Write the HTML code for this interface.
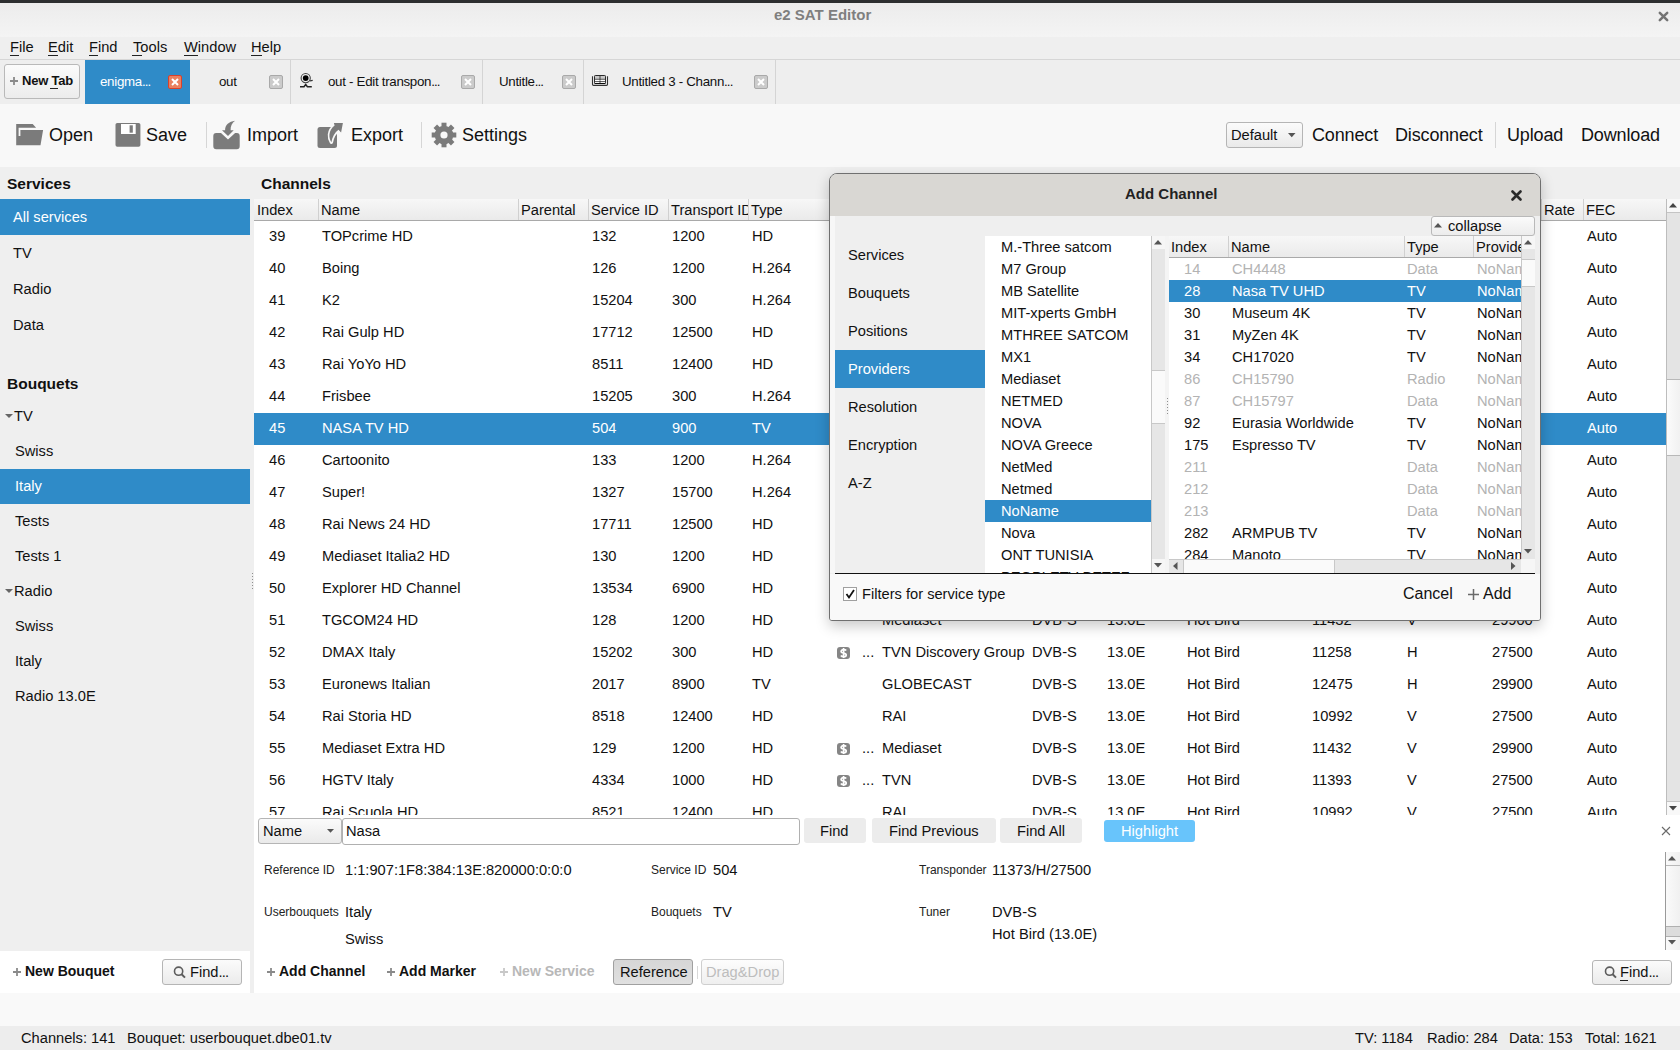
<!DOCTYPE html>
<html><head><meta charset="utf-8"><style>
html,body{margin:0;padding:0;width:1680px;height:1050px;overflow:hidden;background:#efefef;font-family:'Liberation Sans', sans-serif}
.t{position:absolute;white-space:pre;line-height:20px;font-family:'Liberation Sans', sans-serif}
</style></head><body>
<div style="position:absolute;left:0px;top:0px;width:1680px;height:3px;background:#2d2f30"></div>
<div style="position:absolute;left:0px;top:3px;width:1680px;height:34px;background:linear-gradient(#ececec,#f4f4f4)"></div>
<div class="t" style="left:774px;top:5px;font-size:15px;color:#7f7f7f;font-weight:bold;">e2 SAT Editor</div>
<svg style="position:absolute;left:1658px;top:11px" width="11" height="11"><path d="M1.8 1.8L9.2 9.2M9.2 1.8L1.8 9.2" stroke="#737373" stroke-width="2.5" stroke-linecap="round"/></svg>
<div style="position:absolute;left:0px;top:37px;width:1680px;height:22px;background:#efefef"></div>
<div class="t" style="left:10px;top:37px;font-size:14.67px;color:#111;font-weight:normal;">File</div>
<div style="position:absolute;left:10px;top:55px;width:9px;height:1px;background:#222"></div>
<div class="t" style="left:48px;top:37px;font-size:14.67px;color:#111;font-weight:normal;">Edit</div>
<div style="position:absolute;left:48px;top:55px;width:10px;height:1px;background:#222"></div>
<div class="t" style="left:89px;top:37px;font-size:14.67px;color:#111;font-weight:normal;">Find</div>
<div style="position:absolute;left:89px;top:55px;width:9px;height:1px;background:#222"></div>
<div class="t" style="left:133px;top:37px;font-size:14.67px;color:#111;font-weight:normal;">Tools</div>
<div style="position:absolute;left:132px;top:55px;width:10px;height:1px;background:#222"></div>
<div class="t" style="left:184px;top:37px;font-size:14.67px;color:#111;font-weight:normal;">Window</div>
<div style="position:absolute;left:184px;top:55px;width:14px;height:1px;background:#222"></div>
<div class="t" style="left:251px;top:37px;font-size:14.67px;color:#111;font-weight:normal;">Help</div>
<div style="position:absolute;left:251px;top:55px;width:11px;height:1px;background:#222"></div>
<div style="position:absolute;left:0px;top:59px;width:1680px;height:45px;background:#eeeeee;border-top:1px solid #d6d6d6;box-sizing:border-box"></div>
<div style="position:absolute;left:4px;top:64px;width:76px;height:35px;background:linear-gradient(#fbfbfb,#ececec);border:1px solid #b9b9b9;border-radius:3px;box-sizing:border-box"></div>
<svg style="position:absolute;left:9.0px;top:76.0px" width="10" height="10"><path d="M1 5.0H9M5.0 1V9" stroke="#8a8a8a" stroke-width="1.8"/></svg>
<div class="t" style="left:22px;top:71px;font-size:13px;color:#111;font-weight:bold;letter-spacing:-0.2px">New Tab</div>
<div style="position:absolute;left:50px;top:88px;width:8px;height:1px;background:#222"></div>
<div style="position:absolute;left:85px;top:60px;width:105px;height:44px;background:#2f8bc8"></div>
<div class="t" style="left:100px;top:72px;font-size:13.33px;color:#fff;font-weight:normal;letter-spacing:-0.3px">enigma<span style="letter-spacing:-0.9px">...</span></div>
<div style="position:absolute;left:168px;top:75px;width:14px;height:14px;box-sizing:border-box;border:1px solid #d9412b;background:#e98060;border-radius:2px"></div>
<svg style="position:absolute;left:168px;top:75px" width="14" height="14"><path d="M4 4L10 10M10 4L4 10" stroke="#fff" stroke-width="2"/></svg>
<div class="t" style="left:219px;top:72px;font-size:13.33px;color:#111;font-weight:normal;letter-spacing:-0.3px">out</div>
<div style="position:absolute;left:269px;top:75px;width:14px;height:14px;box-sizing:border-box;border:1px solid #a9a9a9;background:#cbcbcb;border-radius:2px"></div>
<svg style="position:absolute;left:269px;top:75px" width="14" height="14"><path d="M4 4L10 10M10 4L4 10" stroke="#fff" stroke-width="2"/></svg>
<div style="position:absolute;left:290px;top:60px;width:1px;height:44px;background:#d4d4d4"></div>
<div class="t" style="left:328px;top:72px;font-size:13.33px;color:#111;font-weight:normal;letter-spacing:-0.3px">out - Edit transpon<span style="letter-spacing:-0.9px">...</span></div>
<div style="position:absolute;left:461px;top:75px;width:14px;height:14px;box-sizing:border-box;border:1px solid #a9a9a9;background:#cbcbcb;border-radius:2px"></div>
<svg style="position:absolute;left:461px;top:75px" width="14" height="14"><path d="M4 4L10 10M10 4L4 10" stroke="#fff" stroke-width="2"/></svg>
<div style="position:absolute;left:482px;top:60px;width:1px;height:44px;background:#d4d4d4"></div>
<div class="t" style="left:499px;top:72px;font-size:13.33px;color:#111;font-weight:normal;letter-spacing:-0.3px">Untitle<span style="letter-spacing:-0.9px">...</span></div>
<div style="position:absolute;left:562px;top:75px;width:14px;height:14px;box-sizing:border-box;border:1px solid #a9a9a9;background:#cbcbcb;border-radius:2px"></div>
<svg style="position:absolute;left:562px;top:75px" width="14" height="14"><path d="M4 4L10 10M10 4L4 10" stroke="#fff" stroke-width="2"/></svg>
<div style="position:absolute;left:583px;top:60px;width:1px;height:44px;background:#d4d4d4"></div>
<div class="t" style="left:622px;top:72px;font-size:13.33px;color:#111;font-weight:normal;letter-spacing:-0.3px">Untitled 3 - Chann<span style="letter-spacing:-0.9px">...</span></div>
<div style="position:absolute;left:754px;top:75px;width:14px;height:14px;box-sizing:border-box;border:1px solid #a9a9a9;background:#cbcbcb;border-radius:2px"></div>
<svg style="position:absolute;left:754px;top:75px" width="14" height="14"><path d="M4 4L10 10M10 4L4 10" stroke="#fff" stroke-width="2"/></svg>
<div style="position:absolute;left:775px;top:60px;width:1px;height:44px;background:#d4d4d4"></div>
<div style="position:absolute;left:0px;top:104px;width:1680px;height:63px;background:#f8f8f8"></div>
<div class="t" style="left:49px;top:125px;font-size:18px;color:#111;font-weight:normal;">Open</div>
<div class="t" style="left:146px;top:125px;font-size:18px;color:#111;font-weight:normal;">Save</div>
<div class="t" style="left:247px;top:125px;font-size:18px;color:#111;font-weight:normal;">Import</div>
<div class="t" style="left:351px;top:125px;font-size:18px;color:#111;font-weight:normal;">Export</div>
<div class="t" style="left:462px;top:125px;font-size:18px;color:#111;font-weight:normal;">Settings</div>
<div class="t" style="left:1312px;top:125px;font-size:18px;color:#111;font-weight:normal;letter-spacing:-0.15px">Connect</div>
<div class="t" style="left:1395px;top:125px;font-size:18px;color:#111;font-weight:normal;letter-spacing:-0.15px">Disconnect</div>
<div class="t" style="left:1507px;top:125px;font-size:18px;color:#111;font-weight:normal;letter-spacing:-0.15px">Upload</div>
<div class="t" style="left:1581px;top:125px;font-size:18px;color:#111;font-weight:normal;letter-spacing:-0.15px">Download</div>
<div style="position:absolute;left:206px;top:122px;width:1px;height:26px;background:#d6d6d6"></div>
<div style="position:absolute;left:421px;top:122px;width:1px;height:26px;background:#d6d6d6"></div>
<div style="position:absolute;left:1495px;top:122px;width:1px;height:26px;background:#d6d6d6"></div>
<div style="position:absolute;left:1226px;top:122px;width:77px;height:26px;background:linear-gradient(#fbfbfb,#eaeaea);border:1px solid #b5b5b5;border-radius:3px;box-sizing:border-box"></div>
<div class="t" style="left:1231px;top:125px;font-size:14.67px;color:#111;font-weight:normal;">Default</div>
<svg style="position:absolute;left:1288px;top:133px" width="8" height="5"><path d="M0 0H7.5L3.75 4.2z" fill="#555"/></svg>
<svg style="position:absolute;left:12px;top:118px" width="36" height="34"><path d="M4.2 6.1H20.7L24.1 9.7H6.6V18.1H8.4V12H31.1L28.5 27.2H4.2Z" fill="#7b7b7b"/></svg>
<svg style="position:absolute;left:110px;top:118px" width="36" height="34"><rect x="5.5" y="4.9" width="24.9" height="23.9" rx="1.8" fill="#7b7b7b"/><rect x="11" y="6" width="14.7" height="10" fill="#fff"/><rect x="19.6" y="7.3" width="3.2" height="7.4" fill="#7b7b7b"/></svg>
<svg style="position:absolute;left:208px;top:116px" width="36" height="36"><path d="M5.3 20Q5.3 17.1 8.2 17.1H13L20 23.6L27.1 17.1H28.8Q31.7 17.1 31.7 20V30.3Q31.7 33.3 28.7 33.3H8.3Q5.3 33.3 5.3 30.3Z" fill="#7b7b7b"/><path d="M14 14.2H17.1C17.1 9 21 5.5 27.1 4.8C24 7 22.5 10 22.6 14.2H25.7L20 19.9Z" fill="#7b7b7b"/></svg>
<svg style="position:absolute;left:312px;top:116px" width="36" height="36"><rect x="5.5" y="11" width="19.5" height="20.9" rx="2.5" fill="#7b7b7b"/><path d="M21.9 6.9H30.9L29.1 16.5L26.5 13.8C22.8 16.5 20.2 21 19.4 26.3C16.6 22 16 15 22.6 9.6Z" fill="#7b7b7b" stroke="#f8f8f8" stroke-width="3.4" paint-order="stroke" stroke-linejoin="round"/></svg>
<svg style="position:absolute;left:420px;top:110px" width="50" height="50"><rect x="21.5" y="12.7" width="5" height="24.6" fill="#7b7b7b" transform="rotate(0 24 25)"/><rect x="21.5" y="12.7" width="5" height="24.6" fill="#7b7b7b" transform="rotate(45 24 25)"/><rect x="21.5" y="12.7" width="5" height="24.6" fill="#7b7b7b" transform="rotate(90 24 25)"/><rect x="21.5" y="12.7" width="5" height="24.6" fill="#7b7b7b" transform="rotate(135 24 25)"/><circle cx="24" cy="25" r="9.3" fill="#7b7b7b"/><circle cx="24" cy="25" r="3.6" fill="#f8f8f8"/></svg>
<svg style="position:absolute;left:294px;top:68px" width="24" height="28"><circle cx="11.7" cy="10.1" r="4.6" fill="none" stroke="#444" stroke-width="1.1"/><circle cx="11.7" cy="10.1" r="2.9" fill="#000"/><path d="M6 18.8H10L11.7 16.5L13.4 18.8H17.8" stroke="#222" stroke-width="1.5" fill="none"/><path d="M16 12.8L18.7 12.3" stroke="#333" stroke-width="1.2"/></svg>
<svg style="position:absolute;left:588px;top:70px" width="24" height="20"><path d="M4.5 6.3V14.5Q4.5 15.4 5.5 15.4H18.5Q19.5 15.4 19.5 14.5V6.3" fill="none" stroke="#333" stroke-width="1.1"/><rect x="6.5" y="5.5" width="11" height="7.8" rx="0.8" fill="#c8c8c8" stroke="#2a2a2a" stroke-width="1"/><path d="M6.5 9.3H17.5M6.5 11.4H17.5M12 5.5V13.3" stroke="#333" stroke-width="0.9"/><path d="M6.5 13.3H17.5" stroke="#000" stroke-width="1.1"/><rect x="7" y="9.8" width="4.5" height="1.2" fill="#fff"/><rect x="12.5" y="9.8" width="4.5" height="1.2" fill="#fff"/><rect x="7" y="11.9" width="4.5" height="1" fill="#fff"/><rect x="12.5" y="11.9" width="4.5" height="1" fill="#fff"/></svg>
<div style="position:absolute;left:0px;top:167px;width:1680px;height:859px;background:#efefef"></div>
<div class="t" style="left:7px;top:174px;font-size:15.5px;color:#111;font-weight:bold;">Services</div>
<div style="position:absolute;left:0px;top:199px;width:250px;height:36px;background:#2f8bc8"></div>
<div class="t" style="left:13px;top:207px;font-size:14.67px;color:#fff;font-weight:normal;">All services</div>
<div class="t" style="left:13px;top:243px;font-size:14.67px;color:#111;font-weight:normal;">TV</div>
<div class="t" style="left:13px;top:279px;font-size:14.67px;color:#111;font-weight:normal;">Radio</div>
<div class="t" style="left:13px;top:315px;font-size:14.67px;color:#111;font-weight:normal;">Data</div>
<div class="t" style="left:7px;top:374px;font-size:15.5px;color:#111;font-weight:bold;">Bouquets</div>
<div style="position:absolute;left:0px;top:469px;width:250px;height:35px;background:#2f8bc8"></div>
<div class="t" style="left:14px;top:406px;font-size:14.67px;color:#111;font-weight:normal;">TV</div>
<svg style="position:absolute;left:4.5px;top:414px" width="9" height="5"><path d="M0 0H8L4 4z" fill="#666"/></svg>
<div class="t" style="left:15px;top:441px;font-size:14.67px;color:#111;font-weight:normal;">Swiss</div>
<div class="t" style="left:15px;top:476px;font-size:14.67px;color:#fff;font-weight:normal;">Italy</div>
<div class="t" style="left:15px;top:511px;font-size:14.67px;color:#111;font-weight:normal;">Tests</div>
<div class="t" style="left:15px;top:546px;font-size:14.67px;color:#111;font-weight:normal;">Tests 1</div>
<div class="t" style="left:14px;top:581px;font-size:14.67px;color:#111;font-weight:normal;">Radio</div>
<svg style="position:absolute;left:4.5px;top:589px" width="9" height="5"><path d="M0 0H8L4 4z" fill="#666"/></svg>
<div class="t" style="left:15px;top:616px;font-size:14.67px;color:#111;font-weight:normal;">Swiss</div>
<div class="t" style="left:15px;top:651px;font-size:14.67px;color:#111;font-weight:normal;">Italy</div>
<div class="t" style="left:15px;top:686px;font-size:14.67px;color:#111;font-weight:normal;">Radio 13.0E</div>
<div style="position:absolute;left:0px;top:951px;width:250px;height:42px;background:#fff"></div>
<svg style="position:absolute;left:12.0px;top:967.0px" width="10" height="10"><path d="M1 5.0H9M5.0 1V9" stroke="#8a8a8a" stroke-width="1.8"/></svg>
<div class="t" style="left:25px;top:961px;font-size:14px;color:#111;font-weight:bold;">New Bouquet</div>
<div style="position:absolute;left:162px;top:959px;width:80px;height:26px;background:linear-gradient(#fbfbfb,#ebebeb);border:1px solid #b5b5b5;border-radius:3px;box-sizing:border-box"></div>
<svg style="position:absolute;left:173px;top:965px" width="14" height="14"><circle cx="5.6" cy="6.2" r="4.1" fill="none" stroke="#5c5c5c" stroke-width="1.6"/><path d="M8.6 9.3L12 12.6" stroke="#5c5c5c" stroke-width="2"/></svg>
<div class="t" style="left:190px;top:962px;font-size:14.67px;color:#111;font-weight:normal;">Find<span style="letter-spacing:-0.8px">...</span></div>
<div class="t" style="left:261px;top:174px;font-size:15.5px;color:#111;font-weight:bold;">Channels</div>
<div style="position:absolute;left:254px;top:199px;width:1413px;height:616px;background:#fff"></div>
<div style="position:absolute;left:254px;top:199px;width:1413px;height:22px;background:linear-gradient(#f7f7f7,#eaeaea);border-bottom:1px solid #a9a9a9;box-sizing:border-box"></div>
<div style="position:absolute;left:254px;top:199px;width:64px;height:21px;overflow:hidden"><div class="t" style="left:3px;top:1px;font-size:14.67px;color:#111">Index</div></div>
<div style="position:absolute;left:318px;top:199px;width:1px;height:21px;background:#d0d0d0"></div>
<div style="position:absolute;left:318px;top:199px;width:200px;height:21px;overflow:hidden"><div class="t" style="left:3px;top:1px;font-size:14.67px;color:#111">Name</div></div>
<div style="position:absolute;left:518px;top:199px;width:1px;height:21px;background:#d0d0d0"></div>
<div style="position:absolute;left:518px;top:199px;width:70px;height:21px;overflow:hidden"><div class="t" style="left:3px;top:1px;font-size:14.67px;color:#111">Parental</div></div>
<div style="position:absolute;left:588px;top:199px;width:1px;height:21px;background:#d0d0d0"></div>
<div style="position:absolute;left:588px;top:199px;width:80px;height:21px;overflow:hidden"><div class="t" style="left:3px;top:1px;font-size:14.67px;color:#111">Service ID</div></div>
<div style="position:absolute;left:668px;top:199px;width:1px;height:21px;background:#d0d0d0"></div>
<div style="position:absolute;left:668px;top:199px;width:80px;height:21px;overflow:hidden"><div class="t" style="left:3px;top:1px;font-size:14.67px;color:#111">Transport ID</div></div>
<div style="position:absolute;left:748px;top:199px;width:1px;height:21px;background:#d0d0d0"></div>
<div style="position:absolute;left:748px;top:199px;width:80px;height:21px;overflow:hidden"><div class="t" style="left:3px;top:1px;font-size:14.67px;color:#111">Type</div></div>
<div style="position:absolute;left:1541px;top:199px;width:1px;height:21px;background:#d0d0d0"></div>
<div style="position:absolute;left:1541px;top:199px;width:42px;height:21px;overflow:hidden"><div class="t" style="left:3px;top:1px;font-size:14.67px;color:#111">Rate</div></div>
<div style="position:absolute;left:1583px;top:199px;width:1px;height:21px;background:#d0d0d0"></div>
<div style="position:absolute;left:1583px;top:199px;width:84px;height:21px;overflow:hidden"><div class="t" style="left:3px;top:1px;font-size:14.67px;color:#111">FEC</div></div>
<div style="position:absolute;left:254px;top:221px;width:1413px;height:594px;overflow:hidden">
<div class="t" style="left:15px;top:5px;font-size:14.67px;color:#111">39</div>
<div class="t" style="left:68px;top:5px;font-size:14.67px;color:#111">TOPcrime HD</div>
<div class="t" style="left:338px;top:5px;font-size:14.67px;color:#111">132</div>
<div class="t" style="left:418px;top:5px;font-size:14.67px;color:#111">1200</div>
<div class="t" style="left:498px;top:5px;font-size:14.67px;color:#111">HD</div>
<div class="t" style="left:1333px;top:5px;font-size:14.67px;color:#111">Auto</div>
<div class="t" style="left:15px;top:37px;font-size:14.67px;color:#111">40</div>
<div class="t" style="left:68px;top:37px;font-size:14.67px;color:#111">Boing</div>
<div class="t" style="left:338px;top:37px;font-size:14.67px;color:#111">126</div>
<div class="t" style="left:418px;top:37px;font-size:14.67px;color:#111">1200</div>
<div class="t" style="left:498px;top:37px;font-size:14.67px;color:#111">H.264</div>
<div class="t" style="left:1333px;top:37px;font-size:14.67px;color:#111">Auto</div>
<div class="t" style="left:15px;top:69px;font-size:14.67px;color:#111">41</div>
<div class="t" style="left:68px;top:69px;font-size:14.67px;color:#111">K2</div>
<div class="t" style="left:338px;top:69px;font-size:14.67px;color:#111">15204</div>
<div class="t" style="left:418px;top:69px;font-size:14.67px;color:#111">300</div>
<div class="t" style="left:498px;top:69px;font-size:14.67px;color:#111">H.264</div>
<div class="t" style="left:1333px;top:69px;font-size:14.67px;color:#111">Auto</div>
<div class="t" style="left:15px;top:101px;font-size:14.67px;color:#111">42</div>
<div class="t" style="left:68px;top:101px;font-size:14.67px;color:#111">Rai Gulp HD</div>
<div class="t" style="left:338px;top:101px;font-size:14.67px;color:#111">17712</div>
<div class="t" style="left:418px;top:101px;font-size:14.67px;color:#111">12500</div>
<div class="t" style="left:498px;top:101px;font-size:14.67px;color:#111">HD</div>
<div class="t" style="left:1333px;top:101px;font-size:14.67px;color:#111">Auto</div>
<div class="t" style="left:15px;top:133px;font-size:14.67px;color:#111">43</div>
<div class="t" style="left:68px;top:133px;font-size:14.67px;color:#111">Rai YoYo HD</div>
<div class="t" style="left:338px;top:133px;font-size:14.67px;color:#111">8511</div>
<div class="t" style="left:418px;top:133px;font-size:14.67px;color:#111">12400</div>
<div class="t" style="left:498px;top:133px;font-size:14.67px;color:#111">HD</div>
<div class="t" style="left:1333px;top:133px;font-size:14.67px;color:#111">Auto</div>
<div class="t" style="left:15px;top:165px;font-size:14.67px;color:#111">44</div>
<div class="t" style="left:68px;top:165px;font-size:14.67px;color:#111">Frisbee</div>
<div class="t" style="left:338px;top:165px;font-size:14.67px;color:#111">15205</div>
<div class="t" style="left:418px;top:165px;font-size:14.67px;color:#111">300</div>
<div class="t" style="left:498px;top:165px;font-size:14.67px;color:#111">H.264</div>
<div class="t" style="left:1333px;top:165px;font-size:14.67px;color:#111">Auto</div>
<div style="position:absolute;left:0;top:192px;width:1413px;height:32px;background:#2f8bc8"></div>
<div class="t" style="left:15px;top:197px;font-size:14.67px;color:#fff">45</div>
<div class="t" style="left:68px;top:197px;font-size:14.67px;color:#fff">NASA TV HD</div>
<div class="t" style="left:338px;top:197px;font-size:14.67px;color:#fff">504</div>
<div class="t" style="left:418px;top:197px;font-size:14.67px;color:#fff">900</div>
<div class="t" style="left:498px;top:197px;font-size:14.67px;color:#fff">TV</div>
<div class="t" style="left:1333px;top:197px;font-size:14.67px;color:#fff">Auto</div>
<div class="t" style="left:15px;top:229px;font-size:14.67px;color:#111">46</div>
<div class="t" style="left:68px;top:229px;font-size:14.67px;color:#111">Cartoonito</div>
<div class="t" style="left:338px;top:229px;font-size:14.67px;color:#111">133</div>
<div class="t" style="left:418px;top:229px;font-size:14.67px;color:#111">1200</div>
<div class="t" style="left:498px;top:229px;font-size:14.67px;color:#111">H.264</div>
<div class="t" style="left:1333px;top:229px;font-size:14.67px;color:#111">Auto</div>
<div class="t" style="left:15px;top:261px;font-size:14.67px;color:#111">47</div>
<div class="t" style="left:68px;top:261px;font-size:14.67px;color:#111">Super!</div>
<div class="t" style="left:338px;top:261px;font-size:14.67px;color:#111">1327</div>
<div class="t" style="left:418px;top:261px;font-size:14.67px;color:#111">15700</div>
<div class="t" style="left:498px;top:261px;font-size:14.67px;color:#111">H.264</div>
<div class="t" style="left:1333px;top:261px;font-size:14.67px;color:#111">Auto</div>
<div class="t" style="left:15px;top:293px;font-size:14.67px;color:#111">48</div>
<div class="t" style="left:68px;top:293px;font-size:14.67px;color:#111">Rai News 24 HD</div>
<div class="t" style="left:338px;top:293px;font-size:14.67px;color:#111">17711</div>
<div class="t" style="left:418px;top:293px;font-size:14.67px;color:#111">12500</div>
<div class="t" style="left:498px;top:293px;font-size:14.67px;color:#111">HD</div>
<div class="t" style="left:1333px;top:293px;font-size:14.67px;color:#111">Auto</div>
<div class="t" style="left:15px;top:325px;font-size:14.67px;color:#111">49</div>
<div class="t" style="left:68px;top:325px;font-size:14.67px;color:#111">Mediaset Italia2 HD</div>
<div class="t" style="left:338px;top:325px;font-size:14.67px;color:#111">130</div>
<div class="t" style="left:418px;top:325px;font-size:14.67px;color:#111">1200</div>
<div class="t" style="left:498px;top:325px;font-size:14.67px;color:#111">HD</div>
<div class="t" style="left:1333px;top:325px;font-size:14.67px;color:#111">Auto</div>
<div class="t" style="left:15px;top:357px;font-size:14.67px;color:#111">50</div>
<div class="t" style="left:68px;top:357px;font-size:14.67px;color:#111">Explorer HD Channel</div>
<div class="t" style="left:338px;top:357px;font-size:14.67px;color:#111">13534</div>
<div class="t" style="left:418px;top:357px;font-size:14.67px;color:#111">6900</div>
<div class="t" style="left:498px;top:357px;font-size:14.67px;color:#111">HD</div>
<div class="t" style="left:1333px;top:357px;font-size:14.67px;color:#111">Auto</div>
<div class="t" style="left:15px;top:389px;font-size:14.67px;color:#111">51</div>
<div class="t" style="left:68px;top:389px;font-size:14.67px;color:#111">TGCOM24 HD</div>
<div class="t" style="left:338px;top:389px;font-size:14.67px;color:#111">128</div>
<div class="t" style="left:418px;top:389px;font-size:14.67px;color:#111">1200</div>
<div class="t" style="left:498px;top:389px;font-size:14.67px;color:#111">HD</div>
<div class="t" style="left:628px;top:389px;font-size:14.67px;color:#111">Mediaset</div>
<div class="t" style="left:778px;top:389px;font-size:14.67px;color:#111">DVB-S</div>
<div class="t" style="left:853px;top:389px;font-size:14.67px;color:#111">13.0E</div>
<div class="t" style="left:933px;top:389px;font-size:14.67px;color:#111">Hot Bird</div>
<div class="t" style="left:1058px;top:389px;font-size:14.67px;color:#111">11432</div>
<div class="t" style="left:1153px;top:389px;font-size:14.67px;color:#111">V</div>
<div class="t" style="left:1238px;top:389px;font-size:14.67px;color:#111">29900</div>
<div class="t" style="left:1333px;top:389px;font-size:14.67px;color:#111">Auto</div>
<div class="t" style="left:15px;top:421px;font-size:14.67px;color:#111">52</div>
<div class="t" style="left:68px;top:421px;font-size:14.67px;color:#111">DMAX Italy</div>
<div class="t" style="left:338px;top:421px;font-size:14.67px;color:#111">15202</div>
<div class="t" style="left:418px;top:421px;font-size:14.67px;color:#111">300</div>
<div class="t" style="left:498px;top:421px;font-size:14.67px;color:#111">HD</div>
<svg style="position:absolute;left:583px;top:426px" width="13" height="12"><rect width="13" height="12" rx="3" fill="#858585"/><path d="M9.2 3.6C8.7 2.9 7.8 2.6 6.6 2.6C5.1 2.6 4.1 3.4 4.1 4.5C4.1 6.9 9.2 5.4 9.2 7.9C9.2 9.1 8.1 9.7 6.6 9.7C5.3 9.7 4.4 9.3 3.9 8.5M6.6 1V11" stroke="#fff" stroke-width="1.7" fill="none"/></svg>
<div class="t" style="left:608px;top:421px;font-size:14.67px;color:#111">...</div>
<div class="t" style="left:628px;top:421px;font-size:14.67px;color:#111">TVN Discovery Group</div>
<div class="t" style="left:778px;top:421px;font-size:14.67px;color:#111">DVB-S</div>
<div class="t" style="left:853px;top:421px;font-size:14.67px;color:#111">13.0E</div>
<div class="t" style="left:933px;top:421px;font-size:14.67px;color:#111">Hot Bird</div>
<div class="t" style="left:1058px;top:421px;font-size:14.67px;color:#111">11258</div>
<div class="t" style="left:1153px;top:421px;font-size:14.67px;color:#111">H</div>
<div class="t" style="left:1238px;top:421px;font-size:14.67px;color:#111">27500</div>
<div class="t" style="left:1333px;top:421px;font-size:14.67px;color:#111">Auto</div>
<div class="t" style="left:15px;top:453px;font-size:14.67px;color:#111">53</div>
<div class="t" style="left:68px;top:453px;font-size:14.67px;color:#111">Euronews Italian</div>
<div class="t" style="left:338px;top:453px;font-size:14.67px;color:#111">2017</div>
<div class="t" style="left:418px;top:453px;font-size:14.67px;color:#111">8900</div>
<div class="t" style="left:498px;top:453px;font-size:14.67px;color:#111">TV</div>
<div class="t" style="left:628px;top:453px;font-size:14.67px;color:#111">GLOBECAST</div>
<div class="t" style="left:778px;top:453px;font-size:14.67px;color:#111">DVB-S</div>
<div class="t" style="left:853px;top:453px;font-size:14.67px;color:#111">13.0E</div>
<div class="t" style="left:933px;top:453px;font-size:14.67px;color:#111">Hot Bird</div>
<div class="t" style="left:1058px;top:453px;font-size:14.67px;color:#111">12475</div>
<div class="t" style="left:1153px;top:453px;font-size:14.67px;color:#111">H</div>
<div class="t" style="left:1238px;top:453px;font-size:14.67px;color:#111">29900</div>
<div class="t" style="left:1333px;top:453px;font-size:14.67px;color:#111">Auto</div>
<div class="t" style="left:15px;top:485px;font-size:14.67px;color:#111">54</div>
<div class="t" style="left:68px;top:485px;font-size:14.67px;color:#111">Rai Storia HD</div>
<div class="t" style="left:338px;top:485px;font-size:14.67px;color:#111">8518</div>
<div class="t" style="left:418px;top:485px;font-size:14.67px;color:#111">12400</div>
<div class="t" style="left:498px;top:485px;font-size:14.67px;color:#111">HD</div>
<div class="t" style="left:628px;top:485px;font-size:14.67px;color:#111">RAI</div>
<div class="t" style="left:778px;top:485px;font-size:14.67px;color:#111">DVB-S</div>
<div class="t" style="left:853px;top:485px;font-size:14.67px;color:#111">13.0E</div>
<div class="t" style="left:933px;top:485px;font-size:14.67px;color:#111">Hot Bird</div>
<div class="t" style="left:1058px;top:485px;font-size:14.67px;color:#111">10992</div>
<div class="t" style="left:1153px;top:485px;font-size:14.67px;color:#111">V</div>
<div class="t" style="left:1238px;top:485px;font-size:14.67px;color:#111">27500</div>
<div class="t" style="left:1333px;top:485px;font-size:14.67px;color:#111">Auto</div>
<div class="t" style="left:15px;top:517px;font-size:14.67px;color:#111">55</div>
<div class="t" style="left:68px;top:517px;font-size:14.67px;color:#111">Mediaset Extra HD</div>
<div class="t" style="left:338px;top:517px;font-size:14.67px;color:#111">129</div>
<div class="t" style="left:418px;top:517px;font-size:14.67px;color:#111">1200</div>
<div class="t" style="left:498px;top:517px;font-size:14.67px;color:#111">HD</div>
<svg style="position:absolute;left:583px;top:522px" width="13" height="12"><rect width="13" height="12" rx="3" fill="#858585"/><path d="M9.2 3.6C8.7 2.9 7.8 2.6 6.6 2.6C5.1 2.6 4.1 3.4 4.1 4.5C4.1 6.9 9.2 5.4 9.2 7.9C9.2 9.1 8.1 9.7 6.6 9.7C5.3 9.7 4.4 9.3 3.9 8.5M6.6 1V11" stroke="#fff" stroke-width="1.7" fill="none"/></svg>
<div class="t" style="left:608px;top:517px;font-size:14.67px;color:#111">...</div>
<div class="t" style="left:628px;top:517px;font-size:14.67px;color:#111">Mediaset</div>
<div class="t" style="left:778px;top:517px;font-size:14.67px;color:#111">DVB-S</div>
<div class="t" style="left:853px;top:517px;font-size:14.67px;color:#111">13.0E</div>
<div class="t" style="left:933px;top:517px;font-size:14.67px;color:#111">Hot Bird</div>
<div class="t" style="left:1058px;top:517px;font-size:14.67px;color:#111">11432</div>
<div class="t" style="left:1153px;top:517px;font-size:14.67px;color:#111">V</div>
<div class="t" style="left:1238px;top:517px;font-size:14.67px;color:#111">29900</div>
<div class="t" style="left:1333px;top:517px;font-size:14.67px;color:#111">Auto</div>
<div class="t" style="left:15px;top:549px;font-size:14.67px;color:#111">56</div>
<div class="t" style="left:68px;top:549px;font-size:14.67px;color:#111">HGTV Italy</div>
<div class="t" style="left:338px;top:549px;font-size:14.67px;color:#111">4334</div>
<div class="t" style="left:418px;top:549px;font-size:14.67px;color:#111">1000</div>
<div class="t" style="left:498px;top:549px;font-size:14.67px;color:#111">HD</div>
<svg style="position:absolute;left:583px;top:554px" width="13" height="12"><rect width="13" height="12" rx="3" fill="#858585"/><path d="M9.2 3.6C8.7 2.9 7.8 2.6 6.6 2.6C5.1 2.6 4.1 3.4 4.1 4.5C4.1 6.9 9.2 5.4 9.2 7.9C9.2 9.1 8.1 9.7 6.6 9.7C5.3 9.7 4.4 9.3 3.9 8.5M6.6 1V11" stroke="#fff" stroke-width="1.7" fill="none"/></svg>
<div class="t" style="left:608px;top:549px;font-size:14.67px;color:#111">...</div>
<div class="t" style="left:628px;top:549px;font-size:14.67px;color:#111">TVN</div>
<div class="t" style="left:778px;top:549px;font-size:14.67px;color:#111">DVB-S</div>
<div class="t" style="left:853px;top:549px;font-size:14.67px;color:#111">13.0E</div>
<div class="t" style="left:933px;top:549px;font-size:14.67px;color:#111">Hot Bird</div>
<div class="t" style="left:1058px;top:549px;font-size:14.67px;color:#111">11393</div>
<div class="t" style="left:1153px;top:549px;font-size:14.67px;color:#111">V</div>
<div class="t" style="left:1238px;top:549px;font-size:14.67px;color:#111">27500</div>
<div class="t" style="left:1333px;top:549px;font-size:14.67px;color:#111">Auto</div>
<div class="t" style="left:15px;top:581px;font-size:14.67px;color:#111">57</div>
<div class="t" style="left:68px;top:581px;font-size:14.67px;color:#111">Rai Scuola HD</div>
<div class="t" style="left:338px;top:581px;font-size:14.67px;color:#111">8521</div>
<div class="t" style="left:418px;top:581px;font-size:14.67px;color:#111">12400</div>
<div class="t" style="left:498px;top:581px;font-size:14.67px;color:#111">HD</div>
<div class="t" style="left:628px;top:581px;font-size:14.67px;color:#111">RAI</div>
<div class="t" style="left:778px;top:581px;font-size:14.67px;color:#111">DVB-S</div>
<div class="t" style="left:853px;top:581px;font-size:14.67px;color:#111">13.0E</div>
<div class="t" style="left:933px;top:581px;font-size:14.67px;color:#111">Hot Bird</div>
<div class="t" style="left:1058px;top:581px;font-size:14.67px;color:#111">10992</div>
<div class="t" style="left:1153px;top:581px;font-size:14.67px;color:#111">V</div>
<div class="t" style="left:1238px;top:581px;font-size:14.67px;color:#111">27500</div>
<div class="t" style="left:1333px;top:581px;font-size:14.67px;color:#111">Auto</div>
</div>
<div style="position:absolute;left:1666px;top:199px;width:14px;height:616px;background:#e4e4e4;border-left:1px solid #bdbdbd;box-sizing:border-box"></div>
<div style="position:absolute;left:1667px;top:199px;width:13px;height:14px;background:#f8f8f8;border-bottom:1px solid #c4c4c4;box-sizing:border-box"></div>
<div style="position:absolute;left:1667px;top:379px;width:13px;height:77px;background:linear-gradient(90deg,#fbfbfb,#f1f1f1);border-top:1px solid #b8b8b8;border-bottom:1px solid #b8b8b8;box-sizing:border-box"></div>
<div style="position:absolute;left:1667px;top:801px;width:13px;height:14px;background:#f8f8f8;border-top:1px solid #c4c4c4;box-sizing:border-box"></div>
<svg style="position:absolute;left:1669px;top:203px" width="9" height="5"><path d="M0 4.5H8L4 0z" fill="#444"/></svg>
<svg style="position:absolute;left:1669px;top:806px" width="9" height="5"><path d="M0 0H8L4 4.5z" fill="#444"/></svg>
<div style="position:absolute;left:254px;top:815px;width:1426px;height:178px;background:#fff"></div>
<div style="position:absolute;left:258px;top:818px;width:84px;height:26px;background:linear-gradient(#fbfbfb,#eaeaea);border:1px solid #b5b5b5;border-radius:3px;box-sizing:border-box"></div>
<div class="t" style="left:263px;top:821px;font-size:14.67px;color:#111;font-weight:normal;">Name</div>
<svg style="position:absolute;left:327px;top:829px" width="8" height="5"><path d="M0 0H7L3.5 3.8z" fill="#555"/></svg>
<div style="position:absolute;left:342px;top:818px;width:458px;height:27px;background:#fff;border:1px solid #b0b0b0;border-radius:3px;box-sizing:border-box"></div>
<div class="t" style="left:346px;top:821px;font-size:14.67px;color:#111;font-weight:normal;">Nasa</div>
<div style="position:absolute;left:804px;top:818px;width:62px;height:25px;background:#ececec;border-radius:3px"></div>
<div class="t" style="left:820px;top:821px;font-size:14.67px;color:#111;font-weight:normal;">Find</div>
<div style="position:absolute;left:872px;top:818px;width:124px;height:25px;background:#ececec;border-radius:3px"></div>
<div class="t" style="left:889px;top:821px;font-size:14.67px;color:#111;font-weight:normal;">Find Previous</div>
<div style="position:absolute;left:1000px;top:818px;width:82px;height:25px;background:#ececec;border-radius:3px"></div>
<div class="t" style="left:1017px;top:821px;font-size:14.67px;color:#111;font-weight:normal;">Find All</div>
<div style="position:absolute;left:1104px;top:820px;width:91px;height:22px;background:#68c4fb;border-radius:3px"></div>
<div class="t" style="left:1121px;top:821px;font-size:14.67px;color:#fff;font-weight:normal;">Highlight</div>
<svg style="position:absolute;left:1661px;top:826px" width="10" height="10"><path d="M1 1L9 9M9 1L1 9" stroke="#6a6a6a" stroke-width="1.1"/></svg>
<div class="t" style="left:264px;top:860px;font-size:12px;color:#222;font-weight:normal;">Reference ID</div>
<div class="t" style="left:345px;top:860px;font-size:14.67px;color:#111;font-weight:normal;">1:1:907:1F8:384:13E:820000:0:0:0</div>
<div class="t" style="left:651px;top:860px;font-size:12px;color:#222;font-weight:normal;">Service ID</div>
<div class="t" style="left:713px;top:860px;font-size:14.67px;color:#111;font-weight:normal;">504</div>
<div class="t" style="left:919px;top:860px;font-size:12px;color:#222;font-weight:normal;">Transponder</div>
<div class="t" style="left:992px;top:860px;font-size:14.67px;color:#111;font-weight:normal;">11373/H/27500</div>
<div class="t" style="left:264px;top:902px;font-size:12px;color:#222;font-weight:normal;">Userbouquets</div>
<div class="t" style="left:345px;top:902px;font-size:14.67px;color:#111;font-weight:normal;">Italy</div>
<div class="t" style="left:345px;top:929px;font-size:14.67px;color:#111;font-weight:normal;">Swiss</div>
<div class="t" style="left:651px;top:902px;font-size:12px;color:#222;font-weight:normal;">Bouquets</div>
<div class="t" style="left:713px;top:902px;font-size:14.67px;color:#111;font-weight:normal;">TV</div>
<div class="t" style="left:919px;top:902px;font-size:12px;color:#222;font-weight:normal;">Tuner</div>
<div class="t" style="left:992px;top:902px;font-size:14.67px;color:#111;font-weight:normal;">DVB-S</div>
<div class="t" style="left:992px;top:924px;font-size:14.67px;color:#111;font-weight:normal;">Hot Bird (13.0E)</div>
<div style="position:absolute;left:1665px;top:852px;width:15px;height:98px;background:linear-gradient(90deg,#fafafa,#f0f0f0);border-left:1px solid #9a9a9a;box-sizing:border-box"></div>
<div style="position:absolute;left:1666px;top:865px;width:14px;height:1px;background:#b8b8b8"></div>
<div style="position:absolute;left:1666px;top:926px;width:14px;height:11px;background:#dcdcdc;border-top:1px solid #b0b0b0;border-bottom:1px solid #b0b0b0;box-sizing:border-box"></div>
<svg style="position:absolute;left:1668px;top:856px" width="9" height="5"><path d="M0 4.5H8L4 0z" fill="#555"/></svg>
<svg style="position:absolute;left:1668px;top:940px" width="9" height="5"><path d="M0 0H8L4 4.5z" fill="#555"/></svg>
<svg style="position:absolute;left:266.0px;top:967.0px" width="10" height="10"><path d="M1 5.0H9M5.0 1V9" stroke="#8a8a8a" stroke-width="1.8"/></svg>
<div class="t" style="left:279px;top:961px;font-size:14px;color:#111;font-weight:bold;">Add Channel</div>
<svg style="position:absolute;left:386.0px;top:967.0px" width="10" height="10"><path d="M1 5.0H9M5.0 1V9" stroke="#8a8a8a" stroke-width="1.8"/></svg>
<div class="t" style="left:399px;top:961px;font-size:14px;color:#111;font-weight:bold;">Add Marker</div>
<svg style="position:absolute;left:498.5px;top:967.0px" width="10" height="10"><path d="M1 5.0H9M5.0 1V9" stroke="#c8c8c8" stroke-width="1.8"/></svg>
<div class="t" style="left:512px;top:961px;font-size:14px;color:#b8b8b8;font-weight:bold;">New Service</div>
<div style="position:absolute;left:613px;top:959px;width:80px;height:26px;background:linear-gradient(#d6d6d6,#e0e0e0);border:1px solid #a0a0a0;border-radius:3px;box-sizing:border-box"></div>
<div class="t" style="left:620px;top:962px;font-size:14.67px;color:#111;font-weight:normal;">Reference</div>
<div style="position:absolute;left:697px;top:966px;width:1px;height:13px;background:#d8d8d8"></div>
<div style="position:absolute;left:701px;top:959px;width:83px;height:26px;background:linear-gradient(#fdfdfd,#efefef);border:1px solid #cfcfcf;border-radius:3px;box-sizing:border-box"></div>
<div class="t" style="left:706px;top:962px;font-size:14.67px;color:#bdbdbd;font-weight:normal;">Drag&amp;Drop</div>
<div style="position:absolute;left:1592px;top:960px;width:80px;height:25px;background:linear-gradient(#fbfbfb,#ebebeb);border:1px solid #b5b5b5;border-radius:3px;box-sizing:border-box"></div>
<svg style="position:absolute;left:1604px;top:965px" width="14" height="14"><circle cx="5.6" cy="6.2" r="4.1" fill="none" stroke="#5c5c5c" stroke-width="1.6"/><path d="M8.6 9.3L12 12.6" stroke="#5c5c5c" stroke-width="2"/></svg>
<div class="t" style="left:1620px;top:962px;font-size:14.67px;color:#111;font-weight:normal;">Find<span style="letter-spacing:-0.8px">...</span></div>
<div style="position:absolute;left:1620px;top:980px;width:8px;height:1px;background:#222"></div>
<div style="position:absolute;left:0px;top:993px;width:1680px;height:33px;background:#f9f9f9"></div>
<div style="position:absolute;left:0px;top:1026px;width:1680px;height:24px;background:#ededed"></div>
<div class="t" style="left:21px;top:1028px;font-size:14.67px;color:#111;font-weight:normal;">Channels: 141</div>
<div class="t" style="left:127px;top:1028px;font-size:14.67px;color:#111;font-weight:normal;">Bouquet: userbouquet.dbe01.tv</div>
<div class="t" style="left:1355px;top:1028px;font-size:14.67px;color:#111;font-weight:normal;">TV: 1184</div>
<div class="t" style="left:1427px;top:1028px;font-size:14.67px;color:#111;font-weight:normal;">Radio: 284</div>
<div class="t" style="left:1509px;top:1028px;font-size:14.67px;color:#111;font-weight:normal;">Data: 153</div>
<div class="t" style="left:1585px;top:1028px;font-size:14.67px;color:#111;font-weight:normal;">Total: 1621</div>
<div style="position:absolute;left:829px;top:173px;width:712px;height:448px;box-sizing:border-box;border:1px solid #707070;border-radius:8px 8px 3px 3px;background:#efefef;box-shadow:0 5px 14px rgba(0,0,0,0.22);overflow:hidden">
<div style="position:absolute;left:0;top:0;width:712px;height:42px;background:#d9d7d3"></div>
</div>
<div class="t" style="left:1125px;top:184px;font-size:15px;color:#222;font-weight:bold;">Add Channel</div>
<svg style="position:absolute;left:1511px;top:190px" width="11" height="11"><path d="M1.5 1.5L9.5 9.5M9.5 1.5L1.5 9.5" stroke="#2a2a2a" stroke-width="2.6" stroke-linecap="round"/></svg>
<div style="position:absolute;left:830px;top:216px;width:5px;height:357px;background:#f7f7f7"></div>
<div style="position:absolute;left:835px;top:350px;width:150px;height:38px;background:#2f8bc8"></div>
<div class="t" style="left:848px;top:245px;font-size:14.67px;color:#111;font-weight:normal;">Services</div>
<div class="t" style="left:848px;top:283px;font-size:14.67px;color:#111;font-weight:normal;">Bouquets</div>
<div class="t" style="left:848px;top:321px;font-size:14.67px;color:#111;font-weight:normal;">Positions</div>
<div class="t" style="left:848px;top:359px;font-size:14.67px;color:#fff;font-weight:normal;">Providers</div>
<div class="t" style="left:848px;top:397px;font-size:14.67px;color:#111;font-weight:normal;">Resolution</div>
<div class="t" style="left:848px;top:435px;font-size:14.67px;color:#111;font-weight:normal;">Encryption</div>
<div class="t" style="left:848px;top:473px;font-size:14.67px;color:#111;font-weight:normal;">A-Z</div>
<div style="position:absolute;left:985px;top:236px;width:166px;height:337px;background:#fff"></div>
<div style="position:absolute;left:985px;top:236px;width:166px;height:337px;overflow:hidden">
<div class="t" style="left:16px;top:1px;font-size:14.67px;color:#111">M.-Three satcom</div>
<div class="t" style="left:16px;top:23px;font-size:14.67px;color:#111">M7 Group</div>
<div class="t" style="left:16px;top:45px;font-size:14.67px;color:#111">MB Satellite</div>
<div class="t" style="left:16px;top:67px;font-size:14.67px;color:#111">MIT-xperts GmbH</div>
<div class="t" style="left:16px;top:89px;font-size:14.67px;color:#111">MTHREE SATCOM</div>
<div class="t" style="left:16px;top:111px;font-size:14.67px;color:#111">MX1</div>
<div class="t" style="left:16px;top:133px;font-size:14.67px;color:#111">Mediaset</div>
<div class="t" style="left:16px;top:155px;font-size:14.67px;color:#111">NETMED</div>
<div class="t" style="left:16px;top:177px;font-size:14.67px;color:#111">NOVA</div>
<div class="t" style="left:16px;top:199px;font-size:14.67px;color:#111">NOVA Greece</div>
<div class="t" style="left:16px;top:221px;font-size:14.67px;color:#111">NetMed</div>
<div class="t" style="left:16px;top:243px;font-size:14.67px;color:#111">Netmed</div>
<div style="position:absolute;left:0;top:264px;width:166px;height:22px;background:#2f8bc8"></div>
<div class="t" style="left:16px;top:265px;font-size:14.67px;color:#fff">NoName</div>
<div class="t" style="left:16px;top:287px;font-size:14.67px;color:#111">Nova</div>
<div class="t" style="left:16px;top:309px;font-size:14.67px;color:#111">ONT TUNISIA</div>
<div class="t" style="left:16px;top:331px;font-size:14.67px;color:#111">PEOPLETV BETEZ</div>
</div>
<div style="position:absolute;left:1151px;top:236px;width:14px;height:337px;background:#e6e6e6;border-left:1px solid #c8c8c8;box-sizing:border-box"></div>
<div style="position:absolute;left:1152px;top:236px;width:13px;height:13px;background:#f6f6f6"></div>
<div style="position:absolute;left:1152px;top:370px;width:13px;height:54px;background:#fafafa;border-top:1px solid #c8c8c8;border-bottom:1px solid #c8c8c8;box-sizing:border-box"></div>
<div style="position:absolute;left:1152px;top:559px;width:13px;height:14px;background:#f6f6f6"></div>
<svg style="position:absolute;left:1154px;top:240px" width="9" height="5"><path d="M0 4.5H8L4 0z" fill="#555"/></svg>
<svg style="position:absolute;left:1154px;top:563px" width="9" height="5"><path d="M0 0H8L4 4.5z" fill="#555"/></svg>
<div style="position:absolute;left:1165px;top:236px;width:4px;height:337px;background:#f4f4f4"></div>
<div style="position:absolute;left:1169px;top:236px;width:352px;height:323px;background:#fff"></div>
<div style="position:absolute;left:1169px;top:236px;width:352px;height:22px;background:linear-gradient(#f7f7f7,#eaeaea);border-bottom:1px solid #a9a9a9;box-sizing:border-box"></div>
<div style="position:absolute;left:1228px;top:236px;width:1px;height:21px;background:#d0d0d0"></div>
<div style="position:absolute;left:1404px;top:236px;width:1px;height:21px;background:#d0d0d0"></div>
<div style="position:absolute;left:1473px;top:236px;width:1px;height:21px;background:#d0d0d0"></div>
<div style="position:absolute;left:1169px;top:236px;width:352px;height:22px;overflow:hidden">
<div class="t" style="left:2px;top:1px;font-size:14.67px;color:#111">Index</div>
<div class="t" style="left:62px;top:1px;font-size:14.67px;color:#111">Name</div>
<div class="t" style="left:238px;top:1px;font-size:14.67px;color:#111">Type</div>
<div class="t" style="left:307px;top:1px;font-size:14.67px;color:#111">Provider</div>
</div>
<div style="position:absolute;left:1169px;top:258px;width:352px;height:301px;overflow:hidden">
<div class="t" style="left:15px;top:1px;font-size:14.67px;color:#b3b3b3">14</div>
<div class="t" style="left:63px;top:1px;font-size:14.67px;color:#b3b3b3">CH4448</div>
<div class="t" style="left:238px;top:1px;font-size:14.67px;color:#b3b3b3">Data</div>
<div class="t" style="left:308px;top:1px;font-size:14.67px;color:#b3b3b3">NoName</div>
<div style="position:absolute;left:0;top:22px;width:352px;height:22px;background:#2f8bc8"></div>
<div class="t" style="left:15px;top:23px;font-size:14.67px;color:#fff">28</div>
<div class="t" style="left:63px;top:23px;font-size:14.67px;color:#fff">Nasa TV UHD</div>
<div class="t" style="left:238px;top:23px;font-size:14.67px;color:#fff">TV</div>
<div class="t" style="left:308px;top:23px;font-size:14.67px;color:#fff">NoName</div>
<div class="t" style="left:15px;top:45px;font-size:14.67px;color:#111">30</div>
<div class="t" style="left:63px;top:45px;font-size:14.67px;color:#111">Museum 4K</div>
<div class="t" style="left:238px;top:45px;font-size:14.67px;color:#111">TV</div>
<div class="t" style="left:308px;top:45px;font-size:14.67px;color:#111">NoName</div>
<div class="t" style="left:15px;top:67px;font-size:14.67px;color:#111">31</div>
<div class="t" style="left:63px;top:67px;font-size:14.67px;color:#111">MyZen 4K</div>
<div class="t" style="left:238px;top:67px;font-size:14.67px;color:#111">TV</div>
<div class="t" style="left:308px;top:67px;font-size:14.67px;color:#111">NoName</div>
<div class="t" style="left:15px;top:89px;font-size:14.67px;color:#111">34</div>
<div class="t" style="left:63px;top:89px;font-size:14.67px;color:#111">CH17020</div>
<div class="t" style="left:238px;top:89px;font-size:14.67px;color:#111">TV</div>
<div class="t" style="left:308px;top:89px;font-size:14.67px;color:#111">NoName</div>
<div class="t" style="left:15px;top:111px;font-size:14.67px;color:#b3b3b3">86</div>
<div class="t" style="left:63px;top:111px;font-size:14.67px;color:#b3b3b3">CH15790</div>
<div class="t" style="left:238px;top:111px;font-size:14.67px;color:#b3b3b3">Radio</div>
<div class="t" style="left:308px;top:111px;font-size:14.67px;color:#b3b3b3">NoName</div>
<div class="t" style="left:15px;top:133px;font-size:14.67px;color:#b3b3b3">87</div>
<div class="t" style="left:63px;top:133px;font-size:14.67px;color:#b3b3b3">CH15797</div>
<div class="t" style="left:238px;top:133px;font-size:14.67px;color:#b3b3b3">Data</div>
<div class="t" style="left:308px;top:133px;font-size:14.67px;color:#b3b3b3">NoName</div>
<div class="t" style="left:15px;top:155px;font-size:14.67px;color:#111">92</div>
<div class="t" style="left:63px;top:155px;font-size:14.67px;color:#111">Eurasia Worldwide</div>
<div class="t" style="left:238px;top:155px;font-size:14.67px;color:#111">TV</div>
<div class="t" style="left:308px;top:155px;font-size:14.67px;color:#111">NoName</div>
<div class="t" style="left:15px;top:177px;font-size:14.67px;color:#111">175</div>
<div class="t" style="left:63px;top:177px;font-size:14.67px;color:#111">Espresso TV</div>
<div class="t" style="left:238px;top:177px;font-size:14.67px;color:#111">TV</div>
<div class="t" style="left:308px;top:177px;font-size:14.67px;color:#111">NoName</div>
<div class="t" style="left:15px;top:199px;font-size:14.67px;color:#b3b3b3">211</div>
<div class="t" style="left:63px;top:199px;font-size:14.67px;color:#b3b3b3"></div>
<div class="t" style="left:238px;top:199px;font-size:14.67px;color:#b3b3b3">Data</div>
<div class="t" style="left:308px;top:199px;font-size:14.67px;color:#b3b3b3">NoName</div>
<div class="t" style="left:15px;top:221px;font-size:14.67px;color:#b3b3b3">212</div>
<div class="t" style="left:63px;top:221px;font-size:14.67px;color:#b3b3b3"></div>
<div class="t" style="left:238px;top:221px;font-size:14.67px;color:#b3b3b3">Data</div>
<div class="t" style="left:308px;top:221px;font-size:14.67px;color:#b3b3b3">NoName</div>
<div class="t" style="left:15px;top:243px;font-size:14.67px;color:#b3b3b3">213</div>
<div class="t" style="left:63px;top:243px;font-size:14.67px;color:#b3b3b3"></div>
<div class="t" style="left:238px;top:243px;font-size:14.67px;color:#b3b3b3">Data</div>
<div class="t" style="left:308px;top:243px;font-size:14.67px;color:#b3b3b3">NoName</div>
<div class="t" style="left:15px;top:265px;font-size:14.67px;color:#111">282</div>
<div class="t" style="left:63px;top:265px;font-size:14.67px;color:#111">ARMPUB TV</div>
<div class="t" style="left:238px;top:265px;font-size:14.67px;color:#111">TV</div>
<div class="t" style="left:308px;top:265px;font-size:14.67px;color:#111">NoName</div>
<div class="t" style="left:15px;top:287px;font-size:14.67px;color:#111">284</div>
<div class="t" style="left:63px;top:287px;font-size:14.67px;color:#111">Manoto</div>
<div class="t" style="left:238px;top:287px;font-size:14.67px;color:#111">TV</div>
<div class="t" style="left:308px;top:287px;font-size:14.67px;color:#111">NoName</div>
</div>
<div style="position:absolute;left:1521px;top:236px;width:14px;height:323px;background:#e6e6e6;border-left:1px solid #c8c8c8;box-sizing:border-box"></div>
<div style="position:absolute;left:1522px;top:236px;width:13px;height:13px;background:#f6f6f6"></div>
<div style="position:absolute;left:1522px;top:259px;width:13px;height:28px;background:#fafafa;border-top:1px solid #c8c8c8;border-bottom:1px solid #c8c8c8;box-sizing:border-box"></div>
<svg style="position:absolute;left:1524px;top:240px" width="9" height="5"><path d="M0 4.5H8L4 0z" fill="#555"/></svg>
<svg style="position:absolute;left:1524px;top:549px" width="9" height="5"><path d="M0 0H8L4 4.5z" fill="#555"/></svg>
<div style="position:absolute;left:1169px;top:559px;width:352px;height:14px;background:#e6e6e6;border-top:1px solid #c8c8c8;box-sizing:border-box"></div>
<div style="position:absolute;left:1183px;top:560px;width:152px;height:13px;background:#fafafa;border-left:1px solid #c8c8c8;border-right:1px solid #c8c8c8;box-sizing:border-box"></div>
<div style="position:absolute;left:1521px;top:559px;width:14px;height:14px;background:#f6f6f6"></div>
<svg style="position:absolute;left:1173px;top:562px" width="5" height="9"><path d="M4.5 0V8L0 4z" fill="#555"/></svg>
<svg style="position:absolute;left:1511px;top:562px" width="5" height="9"><path d="M0 0V8L4.5 4z" fill="#555"/></svg>
<div style="position:absolute;left:1431px;top:216px;width:104px;height:20px;background:linear-gradient(#fbfbfb,#ececec);border:1px solid #b9b9b9;border-radius:3px;box-sizing:border-box"></div>
<svg style="position:absolute;left:1434px;top:223px" width="9" height="5"><path d="M0 4.5H8L4 0z" fill="#555"/></svg>
<div class="t" style="left:1448px;top:216px;font-size:14.67px;color:#111;font-weight:normal;">collapse</div>
<div style="position:absolute;left:835px;top:573px;width:700px;height:1px;background:#111"></div>
<div style="position:absolute;left:830px;top:574px;width:710px;height:46px;background:#f9f9f9;border-radius:0 0 2px 2px"></div>
<div style="position:absolute;left:843px;top:587px;width:14px;height:14px;background:#fff;border:1px solid #a0a0a0;box-sizing:border-box"></div>
<svg style="position:absolute;left:844px;top:588px" width="12" height="12"><path d="M2.5 6L5 9.5L10 2" stroke="#111" stroke-width="1.8" fill="none"/></svg>
<div class="t" style="left:862px;top:584px;font-size:14.67px;color:#111;font-weight:normal;">Filters for service type</div>
<div class="t" style="left:1403px;top:584px;font-size:16px;color:#111;font-weight:normal;">Cancel</div>
<svg style="position:absolute;left:1466.5px;top:587.5px" width="13" height="13"><path d="M1 6.5H12M6.5 1V12" stroke="#6a6a6a" stroke-width="1.5"/></svg>
<div class="t" style="left:1483px;top:584px;font-size:16px;color:#111;font-weight:normal;">Add</div>
<div style="position:absolute;left:252px;top:573px;width:1px;height:1px;background:#8f8f8f"></div>
<div style="position:absolute;left:1167px;top:398px;width:1px;height:1px;background:#8f8f8f"></div>
<div style="position:absolute;left:252px;top:576px;width:1px;height:1px;background:#8f8f8f"></div>
<div style="position:absolute;left:1167px;top:401px;width:1px;height:1px;background:#8f8f8f"></div>
<div style="position:absolute;left:252px;top:579px;width:1px;height:1px;background:#8f8f8f"></div>
<div style="position:absolute;left:1167px;top:404px;width:1px;height:1px;background:#8f8f8f"></div>
<div style="position:absolute;left:252px;top:582px;width:1px;height:1px;background:#8f8f8f"></div>
<div style="position:absolute;left:1167px;top:407px;width:1px;height:1px;background:#8f8f8f"></div>
<div style="position:absolute;left:252px;top:585px;width:1px;height:1px;background:#8f8f8f"></div>
<div style="position:absolute;left:1167px;top:410px;width:1px;height:1px;background:#8f8f8f"></div>
<div style="position:absolute;left:252px;top:588px;width:1px;height:1px;background:#8f8f8f"></div>
<div style="position:absolute;left:1167px;top:413px;width:1px;height:1px;background:#8f8f8f"></div>
</body></html>
